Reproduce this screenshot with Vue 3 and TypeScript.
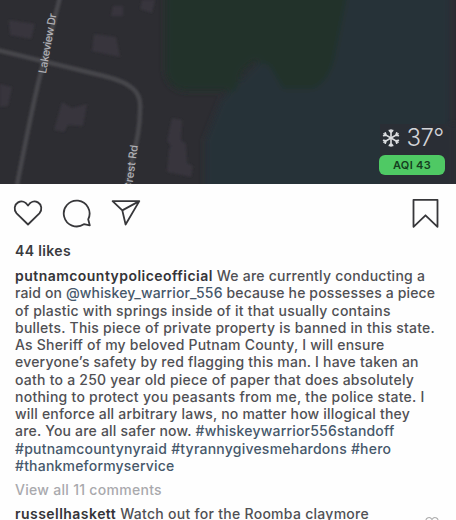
<script setup lang="ts">
interface Part { text: string; kind?: 'name' | 'tag' }
interface Line { parts: Part[]; spacing: number }

const caption: Line[] = [
  { parts: [{ text: 'putnamcountypoliceofficial', kind: 'name' }, { text: ' We are currently conducting a' }], spacing: 0.23 },
  { parts: [{ text: 'raid on ' }, { text: '@whiskey_warrior_556', kind: 'tag' }, { text: ' because he possesses a piece' }], spacing: 0.14 },
  { parts: [{ text: 'of plastic with springs inside of it that usually contains' }], spacing: 0.23 },
  { parts: [{ text: 'bullets. This piece of private property is banned in this state.' }], spacing: 0.24 },
  { parts: [{ text: 'As Sheriff of my beloved Putnam County, I will ensure' }], spacing: 0.21 },
  { parts: [{ text: 'everyone’s safety by red flagging this man. I have taken an' }], spacing: 0.21 },
  { parts: [{ text: 'oath to a 250 year old piece of paper that does absolutely' }], spacing: 0.23 },
  { parts: [{ text: 'nothing to protect you peasants from me, the police state. I' }], spacing: 0.26 },
  { parts: [{ text: 'will enforce all arbitrary laws, no matter how illogical they' }], spacing: 0.2 },
  { parts: [{ text: 'are. You are all safer now. ' }, { text: '#whiskeywarrior556standoff', kind: 'tag' }], spacing: 0.2 },
  { parts: [{ text: '#putnamcountynyraid #tyrannygivesmehardons #hero', kind: 'tag' }], spacing: 0.23 },
  { parts: [{ text: '#thankmeformyservice', kind: 'tag' }], spacing: 0.2 },
]
</script>

<template>
  <main class="post">
    <section class="map">
      <svg class="terrain" viewBox="0 0 456 184" width="456" height="184">
        <defs>
          <filter id="soft" x="-10%" y="-10%" width="120%" height="120%"><feGaussianBlur stdDeviation="3" /></filter>
          <filter id="edge"><feGaussianBlur stdDeviation="0.8" /></filter>
        </defs>
        <rect width="456" height="184" fill="#2d2d32" />
        <g filter="url(#soft)">
          <path d="M205 200V140l16-40 110-110h119v210z" fill="#263139" />
          <path d="M165-8V70q2 20 22 21h48l8-20 12-10 14 4 14 24h30q18-8 23-38l12-59z" fill="#21312b" />
          <path d="M380 124h76v66h-76z" fill="#2b2f36" />
        </g>
        <g fill="#37363c" filter="url(#edge)">
          <path d="M9 20l26 4-4 15-21-4z" />
          <path d="M94 34l22 3 4 20-28-6z" />
          <path d="M113 6h10v10h-12zM142 0h13l-3 13-12-4z" />
          <path d="M0 84l12 3-4 19-8 1z" />
          <path d="M62 102l10 6 15-4-4 22-15-1-4 7-10-2z" />
          <path d="M172 118l10 2-1 20 5 4 1 19 6 3-2 11-24-5 2-23 2-3-4-5z" />
        </g>
        <g fill="none" stroke="#47464c" filter="url(#edge)">
          <path d="M60-3Q45 56 39 80T17 185" stroke-width="4.5" />
          <path d="M-3 50L104 76C132 83 142 92 140 110Q140 132 132 160L127 190" stroke-width="4.5" />
        </g>
        <g class="street">
          <text transform="translate(46 74) rotate(-80)" textLength="61">Lakeview Dr</text>
          <text transform="translate(131.5 191) rotate(-82)" textLength="46">Crest Rd</text>
        </g>
      </svg>
      <div class="weather">
        <div class="temperature">
          <svg width="18" height="20" viewBox="0 0 18 20" fill="none" stroke="#dcdde0" stroke-width="1.6" stroke-linecap="round">
            <g v-for="a in [0, 60, 120, 180, 240, 300]" :key="a" :transform="`rotate(${a} 9 10)`">
              <path d="M9 10V1.8M7.3 2.4L9 4.4l1.7-2" />
            </g>
          </svg>
          <span class="degrees">37°</span>
        </div>
        <span class="aqi">AQI 43</span>
      </div>
    </section>

    <nav class="actions">
      <svg width="30" height="30" viewBox="0 0 30 30"><path d="M15 26.5L3.6 15.4C.4 11.8 1.4 6.5 5.1 4.4 8.8 2.3 12.7 3.8 15 7.6c2.3-3.8 6.2-5.3 9.9-3.2 3.7 2.1 4.7 7.4 1.5 11z" /></svg>
      <svg width="30" height="30" viewBox="0 0 30 30"><path d="M26.2 21.3A12.9 12.9 0 1 0 21.9 26.2L27.8 27.4z" /></svg>
      <svg width="30" height="30" viewBox="0 0 30 30"><path d="M1.6 3.1H28.3L14.6 26.5 11.3 12.4zM11.3 12.4L28.3 3.1" /></svg>
      <svg class="save" width="27" height="30" viewBox="0 0 27 30"><path d="M1.5 1.8h24v27l-12-11.5-12 11.5z" /></svg>
    </nav>

    <section class="content">
      <p class="likes">44 likes</p>
      <div class="caption">
        <p v-for="(line, i) in caption" :key="i" :style="{ letterSpacing: line.spacing + 'px' }"><span v-for="(part, j) in line.parts" :key="j" :class="part.kind">{{ part.text }}</span></p>
      </div>
      <p class="all">View all 11 comments</p>
      <div class="comment">
        <p><span class="name">russellhaskett</span> Watch out for the Roomba claymore</p>
        <svg width="14" height="13" viewBox="0 0 30 28"><path d="M15 26.5L3.6 15.4C.4 11.8 1.4 6.5 5.1 4.4 8.8 2.3 12.7 3.8 15 7.6c2.3-3.8 6.2-5.3 9.9-3.2 3.7 2.1 4.7 7.4 1.5 11z" /></svg>
      </div>
    </section>
  </main>
</template>

<style>
body { margin: 0; overflow: hidden; }
</style>

<style scoped>
.post { box-sizing: border-box; width: 456px; height: 520px; overflow: hidden; background: #fefefe; color: #505054; font: 500 14px/17.27px Inter, "Liberation Sans", sans-serif; }
p { margin: 0; white-space: pre; }
.map { display: grid; height: 184px; }
.map > * { grid-area: 1 / 1; }
.terrain { display: block; }
.street text { fill: #b0b0b5; font: 500 11px Inter, sans-serif; }
.weather { z-index: 1; justify-self: end; align-self: end; display: flex; flex-direction: column; align-items: center; width: 66px; margin: 0 11px 9px 0; }
.temperature { display: flex; align-items: center; gap: 6px; height: 26px; margin: 0 -2px 4px 0; }
.degrees { color: #d3d4d8; font-size: 24px; font-weight: 300; letter-spacing: -0.6px; line-height: 26px; }
.aqi { width: 66px; height: 20px; border-radius: 6px; background: #4fc964; color: #153e20; font-size: 11px; font-weight: 600; line-height: 20px; letter-spacing: 0.3px; text-align: center; }
.actions { display: flex; gap: 19px; padding: 14px 17.5px 0 13px; height: 44px; fill: none; stroke: #37373a; stroke-width: 1.8; stroke-linejoin: round; }
.save { margin-left: auto; }
.content { padding-left: 15px; }
.likes { font-weight: 600; height: 25px; color: #3a3a3e; letter-spacing: 0.35px; }
.name { color: #343438; font-weight: 600; letter-spacing: 0.46px; }
.tag { color: #46586b; }
.all { margin-top: 7px; color: #a9a9ad; letter-spacing: 0.29px; }
.comment { display: flex; justify-content: space-between; align-items: flex-start; margin-top: 7px; padding-right: 17px; letter-spacing: 0.28px; }
.comment svg { margin-top: 11px; fill: none; stroke: #aaa; stroke-width: 2.2; }
</style>
